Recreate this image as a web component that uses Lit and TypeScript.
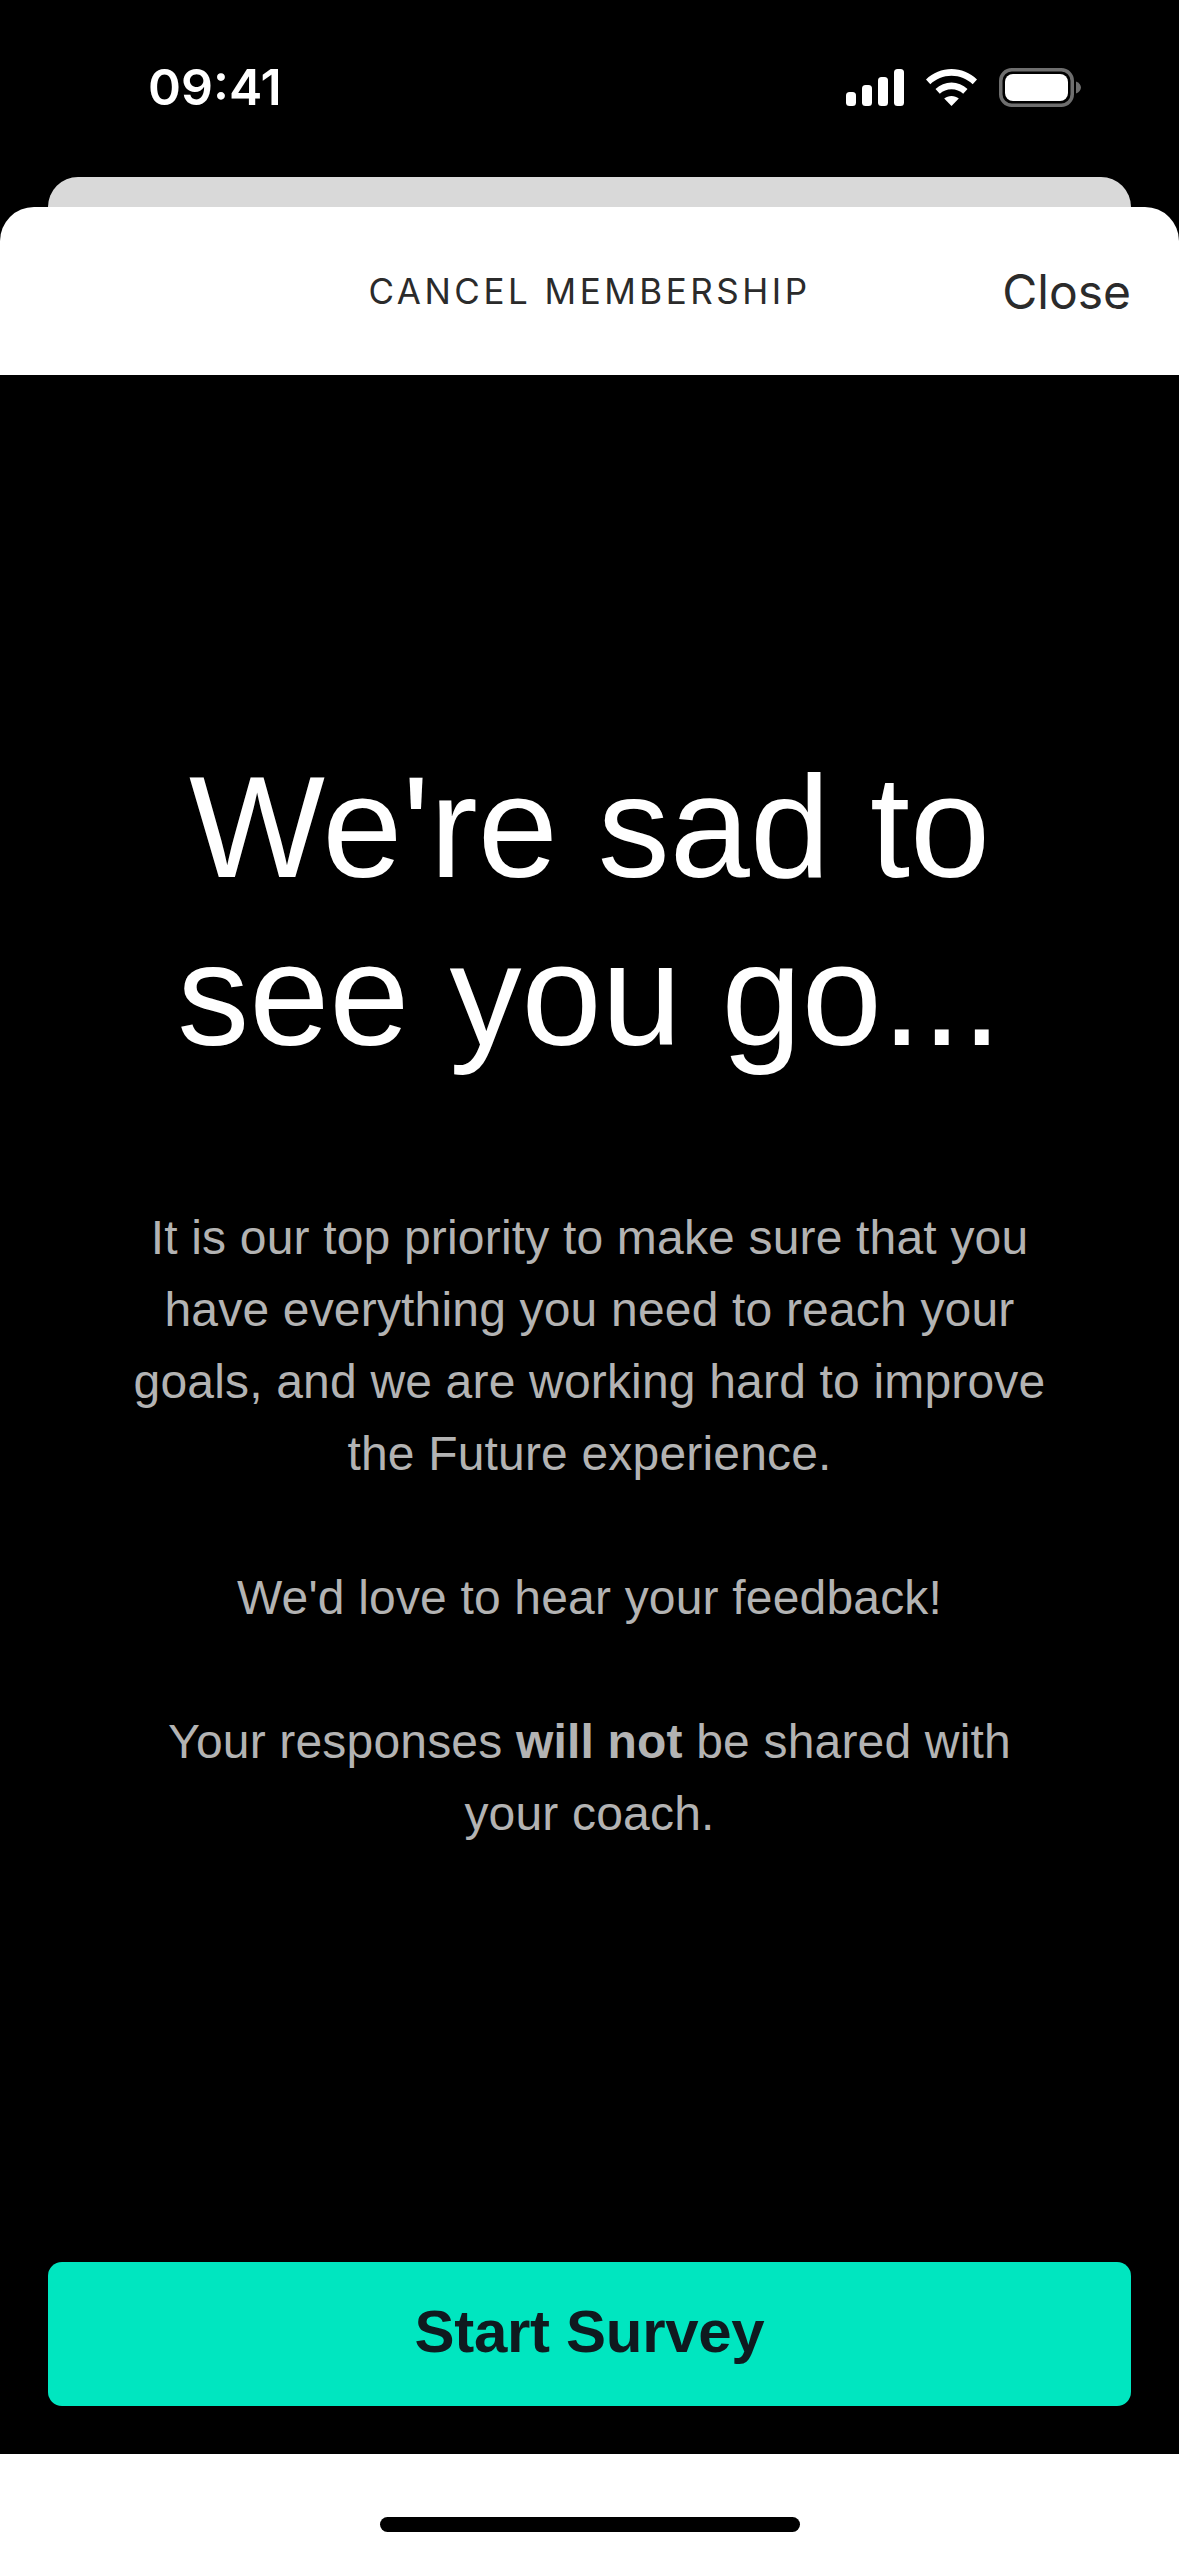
import { LitElement, html, css } from "lit";
import { customElement } from "lit/decorators.js";

@customElement("app-root")
export class AppRoot extends LitElement {
  static styles = css`
    :host {
      display: flex;
      flex-direction: column;
      width: 1179px;
      height: 2556px;
      background: #000;
      overflow: hidden;
      font-family: "Liberation Sans", Arial, sans-serif;
    }
    .status {
      height: 177px;
      flex: none;
      display: flex;
      align-items: flex-start;
      justify-content: space-between;
      padding: 68px 98px 0 148px;
      box-sizing: border-box;
    }
    .time {
      font-family: Inter, sans-serif;
      font-weight: 600;
      font-size: 50px;
      line-height: 39px;
      color: #fff;
    }
    .icons {
      display: flex;
      align-items: flex-start;
      gap: 22px;
    }
    .signal {
      display: block;
      width: 58px;
      height: 37px;
      margin-top: 1px;
    }
    .wifi {
      display: block;
      width: 51px;
      height: 37px;
      margin-top: 1px;
    }
    .battery {
      display: block;
      width: 82px;
      height: 39px;
    }
    .peek {
      flex: none;
      height: 30px;
      margin: 0 48px;
      background: #d9d9d9;
      border-radius: 30px 30px 0 0;
    }
    .sheet {
      flex: none;
      height: 168px;
      background: #fff;
      border-radius: 34px 34px 0 0;
      display: grid;
      grid-template-columns: 1fr auto 1fr;
      align-items: center;
      padding: 0 48px;
      box-sizing: border-box;
      color: #2b2b2b;
      font-family: Inter, sans-serif;
    }
    .title {
      grid-column: 2;
      font-size: 35px;
      letter-spacing: 3.5px;
      font-weight: 400;
    }
    .close {
      grid-column: 3;
      justify-self: end;
      font-size: 48px;
      font-weight: 400;
    }
    .main {
      flex: 1;
      min-height: 0;
      padding-top: 369px;
      box-sizing: border-box;
      text-align: center;
    }
    h1 {
      margin: 0 0 122px;
      font-size: 144px;
      line-height: 168px;
      font-weight: 400;
      color: #fff;
    }
    .body {
      display: flex;
      flex-direction: column;
      gap: 72px;
      color: #b3b3b3;
      font-size: 48px;
      line-height: 72px;
      letter-spacing: 0.18px;
    }
    p {
      margin: 0;
    }
    .cta {
      flex: none;
      padding: 0 48px 48px;
    }
    .btn {
      height: 144px;
      border-radius: 14px;
      background: #00e6c0;
      color: #0f1a1f;
      font-size: 60px;
      letter-spacing: -0.3px;
      font-weight: 700;
      display: flex;
      align-items: center;
      justify-content: center;
      padding-bottom: 6px;
      box-sizing: border-box;
    }
    .home {
      flex: none;
      height: 102px;
      background: #fff;
      display: flex;
      justify-content: center;
      padding-top: 63px;
      box-sizing: border-box;
    }
    .indicator {
      width: 420px;
      height: 15px;
      border-radius: 8px;
      background: #000;
    }
  `;

  render() {
    return html`
      <div class="status">
        <div class="time">09:41</div>
        <div class="icons">
          <svg class="signal" viewBox="0 0 58 37" fill="#fff">
            <rect x="0" y="23" width="10" height="14" rx="3.5"></rect>
            <rect x="16" y="16" width="10" height="21" rx="3.5"></rect>
            <rect x="32" y="8" width="10" height="29" rx="3.5"></rect>
            <rect x="48" y="0" width="10" height="37" rx="3.5"></rect>
          </svg>
          <svg class="wifi" viewBox="0 0 51 37" fill="#fff">
            <path d="M25.5 0C35 0 44 3.8 51 10.5L46.7 15.3C41 9.9 33.6 6.8 25.5 6.8S10 9.9 4.3 15.3L0 10.5C7 3.8 16 0 25.5 0Z"></path>
            <path d="M25.5 13.5C31.5 13.5 37 15.8 41.5 20L37.2 24.8C34 21.9 30 20.3 25.5 20.3S17 21.9 13.8 24.8L9.5 20C14 15.8 19.5 13.5 25.5 13.5Z"></path>
            <path d="M25.5 27C28.3 27 30.8 28 32.8 29.6L25.5 37L18.2 29.6C20.2 28 22.7 27 25.5 27Z"></path>
          </svg>
          <svg class="battery" viewBox="0 0 82 39">
            <rect x="1.75" y="1.75" width="71.5" height="35.5" rx="11" fill="none" stroke="#6e6e6e" stroke-width="3.5"></rect>
            <rect x="6" y="6" width="63" height="27" rx="8" fill="#fff"></rect>
            <path d="M77 13.5C80 14.5 82 17 82 19.5S80 24.5 77 25.5Z" fill="#6e6e6e"></path>
          </svg>
        </div>
      </div>
      <div class="peek"></div>
      <header class="sheet">
        <div class="title">CANCEL MEMBERSHIP</div>
        <div class="close">Close</div>
      </header>
      <main class="main">
        <h1>We're sad to<br />see you go...</h1>
        <div class="body">
          <p>It is our top priority to make sure that you<br />have everything you need to reach your<br />goals, and we are working hard to improve<br />the Future experience.</p>
          <p>We'd love to hear your feedback!</p>
          <p>Your responses <b>will not</b> be shared with<br />your coach.</p>
        </div>
      </main>
      <div class="cta"><div class="btn">Start Survey</div></div>
      <div class="home"><div class="indicator"></div></div>
    `;
  }
}
